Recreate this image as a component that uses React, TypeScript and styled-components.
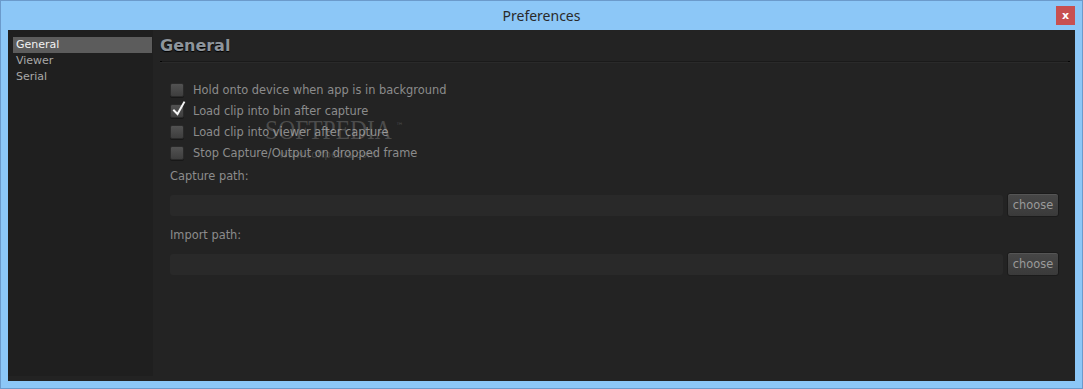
import React from "react";
import styled, { createGlobalStyle } from "styled-components";

const Global = createGlobalStyle`
  html, body { margin: 0; padding: 0; background: #8cc7f7; }
  body { width: 1083px; height: 389px; overflow: hidden; }
  #root { width: 1083px; height: 389px; }
`;

const Window = styled.div`
  box-sizing: border-box;
  width: 1083px;
  height: 389px;
  border: 1px solid #6b9acb;
  background: #8cc7f7;
  display: flex;
  flex-direction: column;
  padding: 0 7px 7px 7px;
`;

const TitleBar = styled.div`
  height: 29px;
  flex: none;
  position: relative;
  display: flex;
  align-items: center;
  justify-content: center;
  font-family: "Noto Sans", "Open Sans", sans-serif;
  font-size: 14px;
  color: #2a2a2a;
`;

const CloseButton = styled.div`
  position: absolute;
  right: 0px;
  top: 5px;
  width: 19px;
  height: 19px;
  background: #c75050;
  color: #fff;
  display: flex;
  align-items: center;
  justify-content: center;
  font-family: "DejaVu Sans", sans-serif;
  font-weight: bold;
  font-size: 11px;
  line-height: 1;
`;

const Content = styled.div`
  flex: 1;
  display: flex;
  background: #232323;
  min-height: 0;
`;

const Sidebar = styled.div`
  width: 145px;
  flex: none;
  background: #1f1f1f;
  margin-bottom: 5px;
  padding: 7px 1px 0 5px;
  box-sizing: border-box;
  display: flex;
  flex-direction: column;
`;

const NavItem = styled.div<{ $active?: boolean }>`
  height: 16px;
  line-height: 16px;
  padding-left: 3px;
  font-family: "DejaVu Sans", Verdana, sans-serif;
  font-size: 11px;
  color: ${(p) => (p.$active ? "#f2f2f2" : "#a8a8a8")};
  background: ${(p) => (p.$active ? "#5c5c5c" : "transparent")};
`;

const Main = styled.div`
  flex: 1;
  padding: 6px 5px 0 7px;
  display: flex;
  flex-direction: column;
  position: relative;
`;

const Heading = styled.h1`
  margin: 0;
  font-family: "DejaVu Sans", Verdana, sans-serif;
  font-weight: bold;
  font-size: 16px;
  line-height: 20px;
  color: #8e959c;
  text-shadow: 0 1px 1px #000;
`;

const Separator = styled.div`
  height: 1px;
  margin: 5px 0 0 0;
  background: #1a1a1a;
  border-left: 2px solid #050505;
  border-right: 2px solid #050505;
  box-shadow: 0 1px 0 #2a2a2a;
`;

const Form = styled.div`
  padding: 17px 11px 0 10px;
  display: flex;
  flex-direction: column;
`;

const CheckRow = styled.label`
  height: 21px;
  display: flex;
  align-items: center;
  gap: 9px;
  font-family: "DejaVu Sans", Verdana, sans-serif;
  font-size: 11.4px;
  color: #8c8c8c;
`;

const Box = styled.span`
  position: relative;
  width: 14px;
  height: 14px;
  box-sizing: border-box;
  border-radius: 2px;
  border: 1px solid #2a2a2a;
  background: linear-gradient(#525252, #3e3e3e);
  box-shadow: 0 1px 0 #181818;
  flex: none;
`;

const Check = styled.svg`
  position: absolute;
  left: 1px;
  top: -4px;
`;

const FieldLabel = styled.div<{ $gap: number }>`
  margin-top: ${(p) => p.$gap}px;
  height: 16px;
  line-height: 16px;
  font-family: "DejaVu Sans", Verdana, sans-serif;
  font-size: 11.4px;
  color: #8c8c8c;
`;

const PathRow = styled.div`
  display: flex;
  align-items: center;
  gap: 4px;
  margin-top: 9px;
  height: 24px;
`;

const PathInput = styled.div`
  flex: 1;
  height: 21px;
  border-radius: 3px;
  background: #292929;
`;

const ChooseButton = styled.div`
  width: 52px;
  height: 24px;
  box-sizing: border-box;
  border: 1px solid #1b1b1b;
  border-radius: 3px;
  background: linear-gradient(#474747, #3a3a3a);
  box-shadow: inset 0 1px 0 #555;
  display: flex;
  align-items: center;
  justify-content: center;
  font-family: "DejaVu Sans", Verdana, sans-serif;
  font-size: 11.4px;
  color: #9a9a9a;
`;

const Watermark = styled.div`
  position: absolute;
  left: 100px;
  top: 85px;
  width: 150px;
  pointer-events: none;
  display: flex;
  flex-direction: column;
  align-items: center;
`;

const WatermarkTitle = styled.div`
  font-family: "Liberation Serif", serif;
  font-size: 28px;
  line-height: 30px;
  transform: scaleX(0.84);
  color: rgba(200, 200, 200, 0.26);
  position: relative;
`;

const Tm = styled.span`
  position: absolute;
  right: -14px;
  top: -4px;
  font-size: 9px;
  font-family: "DejaVu Sans", sans-serif;
`;

const WatermarkUrl = styled.div`
  font-family: "DejaVu Sans", sans-serif;
  font-size: 10px;
  margin-top: 4px;
  color: rgba(200, 200, 200, 0.2);
`;

const CheckBox = ({ checked }: { checked?: boolean }) => (
  <Box>
    {checked && (
      <Check width="14" height="16" viewBox="0 0 14 16">
        <path d="M2 9.5 L5.5 13 L12 1.5" fill="none" stroke="#f4f4f4" strokeWidth="2" strokeLinecap="square" />
      </Check>
    )}
  </Box>
);

const options = [
  { label: "Hold onto device when app is in background", checked: false },
  { label: "Load clip into bin after capture", checked: true },
  { label: "Load clip into viewer after capture", checked: false },
  { label: "Stop Capture/Output on dropped frame", checked: false },
];

export default function App() {
  return (
    <>
      <Global />
      <Window>
        <TitleBar>
          Preferences
          <CloseButton>x</CloseButton>
        </TitleBar>
        <Content>
          <Sidebar>
            <NavItem $active>General</NavItem>
            <NavItem>Viewer</NavItem>
            <NavItem>Serial</NavItem>
          </Sidebar>
          <Main>
            <Heading>General</Heading>
            <Separator />
            <Form>
              {options.map((o) => (
                <CheckRow key={o.label}>
                  <CheckBox checked={o.checked} />
                  {o.label}
                </CheckRow>
              ))}
              <FieldLabel $gap={5}>Capture path:</FieldLabel>
              <PathRow>
                <PathInput />
                <ChooseButton>choose</ChooseButton>
              </PathRow>
              <FieldLabel $gap={10}>Import path:</FieldLabel>
              <PathRow>
                <PathInput />
                <ChooseButton>choose</ChooseButton>
              </PathRow>
            </Form>
            <Watermark>
              <WatermarkTitle>
                SOFTPEDIA<Tm>™</Tm>
              </WatermarkTitle>
              <WatermarkUrl>www.softpedia.com</WatermarkUrl>
            </Watermark>
          </Main>
        </Content>
      </Window>
    </>
  );
}
